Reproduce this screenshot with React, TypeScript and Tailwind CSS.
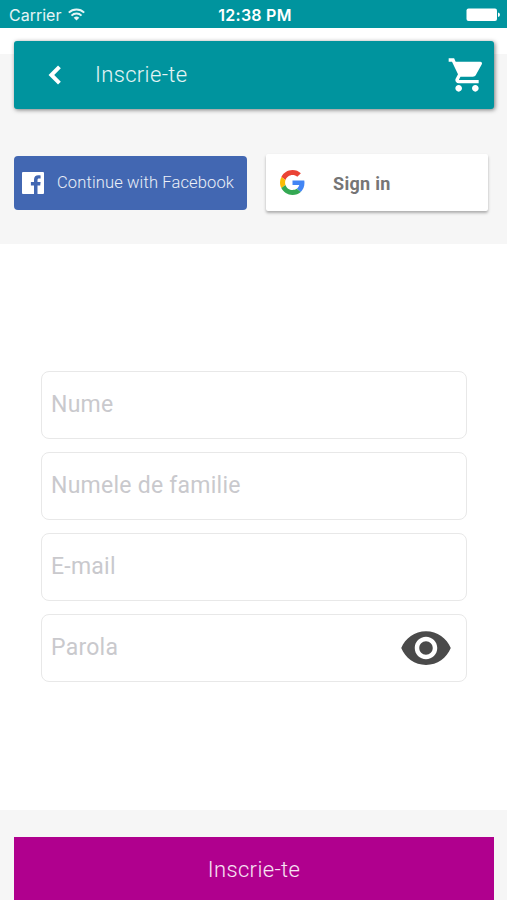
import React, { useState } from 'react';
import { MdRemoveRedEye, MdShoppingCart } from 'react-icons/md';

const fields = [
  { name: 'firstName', label: 'Nume', type: 'text' },
  { name: 'lastName', label: 'Numele de familie', type: 'text' },
  { name: 'email', label: 'E-mail', type: 'email' },
  { name: 'password', label: 'Parola', type: 'password' },
];

const StatusBar: React.FC = () => (
  <div className="grid h-7 shrink-0 grid-cols-3 items-center bg-[#00949e] pl-[9px] pr-[7px] pt-[2px] text-white">
    <div className="flex items-center gap-[7px] font-['Inter',sans-serif] text-[16px] text-white/90">
      <span>Carrier</span>
      <svg viewBox="0 0 17 13" className="mb-[2px] h-[13px] w-[17px]" fill="none" stroke="currentColor" strokeWidth="2">
        <path d="M0.8 4.6a11 11 0 0 1 15.4 0" />
        <path d="M3.5 7.6a7.1 7.1 0 0 1 10 0" />
        <path d="M8.5 12.6 5.7 9.8a4 4 0 0 1 5.6 0z" fill="currentColor" stroke="none" />
      </svg>
    </div>
    <span className="pl-px text-center font-['Inter',sans-serif] text-[16px] font-semibold tracking-[0.25px]">12:38 PM</span>
    <svg viewBox="0 0 34 14" className="h-[14px] w-[34px] justify-self-end" fill="currentColor">
      <rect x="0.5" y="0.5" width="30.5" height="12.5" rx="2" />
      <path d="M32 4.5q2 .4 2 2.3t-2 2.3z" />
    </svg>
  </div>
);

const BackIcon: React.FC = () => (
  <svg viewBox="0 0 24 24" className="size-[38px]" fill="none" stroke="currentColor" strokeWidth="2.5">
    <path d="M14.8 6.9 9.7 12l5.1 5.1" />
  </svg>
);

const FacebookLogo: React.FC = () => (
  <svg viewBox="0 0 22 22" className="size-[22px] shrink-0">
    <rect width="22" height="22" rx="1" fill="#fff" />
    <path
      d="M12 22v-8.4H8.9v-3.5H12V7.7c0-2.9 1.7-4.4 4.3-4.4.9 0 1.8.1 2.3.2v3.1H17c-1.2 0-1.5.6-1.5 1.5v2h3.1l-.4 3.5h-2.7V22z"
      fill="#4267b2"
    />
  </svg>
);

const GoogleLogo: React.FC = () => (
  <svg viewBox="0 0 48 48" className="size-[25px] shrink-0">
    <path fill="#EA4335" d="M24 9.5c3.54 0 6.71 1.22 9.21 3.6l6.85-6.85C35.9 2.38 30.47 0 24 0 14.62 0 6.51 5.38 2.56 13.22l7.98 6.19C12.43 13.72 17.74 9.5 24 9.5z" />
    <path fill="#4285F4" d="M46.98 24.55c0-1.57-.15-3.09-.38-4.55H24v9.02h12.94c-.58 2.96-2.26 5.48-4.78 7.18l7.73 6c4.51-4.18 7.09-10.36 7.09-17.65z" />
    <path fill="#FBBC05" d="M10.53 28.59c-.48-1.45-.76-2.99-.76-4.59s.27-3.14.76-4.59l-7.98-6.19C.92 16.46 0 20.12 0 24c0 3.88.92 7.54 2.56 10.78l7.97-6.19z" />
    <path fill="#34A853" d="M24 48c6.48 0 11.93-2.13 15.89-5.81l-7.73-6c-2.15 1.45-4.92 2.3-8.16 2.3-6.26 0-11.57-4.22-13.47-9.91l-7.98 6.19C6.51 42.62 14.62 48 24 48z" />
  </svg>
);

const App: React.FC = () => {
  const [showPassword, setShowPassword] = useState(false);

  return (
    <div className="flex h-[900px] w-full flex-col overflow-hidden bg-white font-['Roboto',sans-serif]">
      <StatusBar />

      {/* Header */}
      <div className="mt-[26px] h-[190px] shrink-0 bg-[#f6f6f6] pl-[14px] pr-[13px]">
        <header className="-mt-[13px] flex h-[68px] items-center rounded-[3px] bg-[#00949e] pl-[22px] pr-[7px] text-white shadow-[1px_1px_4px_rgba(0,0,0,0.5)]">
          <button type="button" aria-label="Înapoi">
            <BackIcon />
          </button>
          <h1 className="mb-px ml-[21px] text-[22px] font-light tracking-[0.35px] text-white/90">Inscrie-te</h1>
          <button type="button" aria-label="Coș" className="ml-auto">
            <MdShoppingCart className="size-[40px]" />
          </button>
        </header>

        {/* Social login */}
        <div className="mt-[45px] flex items-center justify-between pr-[6px]">
          <button type="button" className="mt-px flex h-[54px] w-[233px] items-center gap-[13px] rounded-[4px] bg-[#4267b2] pl-[8px]">
            <FacebookLogo />
            <span className="whitespace-nowrap text-[16.5px] font-light tracking-[0.14px] text-white/90">Continue with Facebook</span>
          </button>
          <button type="button" className="flex h-[57px] w-[222px] items-center gap-[28px] rounded-[2px] bg-white pl-[14px] shadow-[0_2px_3px_rgba(0,0,0,0.3)]">
            <GoogleLogo />
            <span className="pt-px text-[18px] font-bold tracking-[0.3px] text-[#757575]">Sign in</span>
          </button>
        </div>
      </div>

      {/* Form */}
      <form className="flex h-[566px] shrink-0 flex-col gap-[13px] px-[41px] pt-[127px]">
        {fields.map((field) => (
          <div key={field.name} className="flex h-[68px] w-[426px] items-center rounded-[8px] border-[1.5px] border-[#e8e8e8] pl-[9px] pr-[13px]">
            <input
              name={field.name}
              type={field.type === 'password' && showPassword ? 'text' : field.type}
              placeholder={field.label}
              className="min-w-0 flex-1 bg-transparent text-[23px] tracking-[0.25px] text-gray-700 outline-none placeholder:text-[#c9c9cd]"
            />
            {field.type === 'password' && (
              <button type="button" aria-label="Arată parola" onClick={() => setShowPassword(!showPassword)}>
                <MdRemoveRedEye className="size-[54px] text-[#4a4a4a]" />
              </button>
            )}
          </div>
        ))}
      </form>

      {/* Footer */}
      <footer className="flex flex-1 flex-col bg-[#f6f6f6] pl-[14px] pr-[13px] pt-[27px]">
        <button type="submit" className="h-full bg-[#b0008e] pt-[2px] text-[22px] font-light tracking-[0.35px] text-white/90">
          Inscrie-te
        </button>
      </footer>
    </div>
  );
};

export default App;
